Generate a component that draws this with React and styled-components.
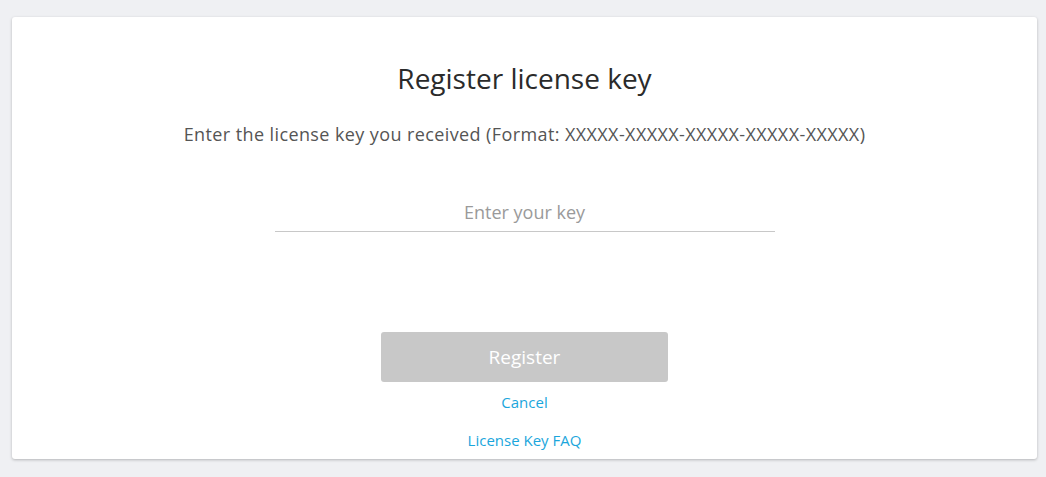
import React from "react";
import styled, { createGlobalStyle } from "styled-components";

const GlobalStyle = createGlobalStyle`
  html, body {
    margin: 0;
    padding: 0;
    background: #eff0f3;
    font-family: "Open Sans", "Noto Sans", sans-serif;
  }
`;

const Page = styled.div`
  padding: 17px 9px 18px 12px;
`;

const Card = styled.div`
  background: #fff;
  border-radius: 3px;
  box-shadow: 0 1px 3px rgba(0, 0, 0, 0.25);
  height: 442px;
  box-sizing: border-box;
  display: flex;
  flex-direction: column;
  align-items: center;
  padding-top: 43px;
`;

const Title = styled.h1`
  margin: 0;
  font-size: 28px;
  font-weight: 400;
  color: #2b2b2b;
  line-height: 36px;
`;

const Subtitle = styled.p`
  margin: 26px 0 0;
  font-size: 18px;
  letter-spacing: 0.4px;
  color: #555;
  line-height: 24px;
`;

const KeyInput = styled.input`
  margin-top: 53px;
  width: 500px;
  box-sizing: border-box;
  border: none;
  border-bottom: 1px solid #c8c8c8;
  outline: none;
  text-align: center;
  font-family: inherit;
  font-size: 18px;
  color: #333;
  padding: 0 0 6px;
  height: 33px;
  &::placeholder {
    color: #9a9a9a;
  }
`;

const RegisterButton = styled.button`
  margin-top: 100px;
  width: 287px;
  height: 50px;
  border: none;
  border-radius: 3px;
  background: #c8c8c8;
  color: #fff;
  font-family: inherit;
  font-size: 19px;
`;

const TextLink = styled.a`
  margin-top: ${(p) => p.$gap}px;
  color: #1ba6dc;
  font-size: 15px;
  line-height: 20px;
  text-decoration: none;
  cursor: pointer;
`;

const App = () => (
  <>
    <GlobalStyle />
    <Page>
      <Card>
        <Title>Register license key</Title>
        <Subtitle>
          Enter the license key you received (Format: XXXXX-XXXXX-XXXXX-XXXXX-XXXXX)
        </Subtitle>
        <KeyInput placeholder="Enter your key" />
        <RegisterButton disabled>Register</RegisterButton>
        <TextLink $gap={10}>Cancel</TextLink>
        <TextLink $gap={18}>License Key FAQ</TextLink>
      </Card>
    </Page>
  </>
);

export default App;
